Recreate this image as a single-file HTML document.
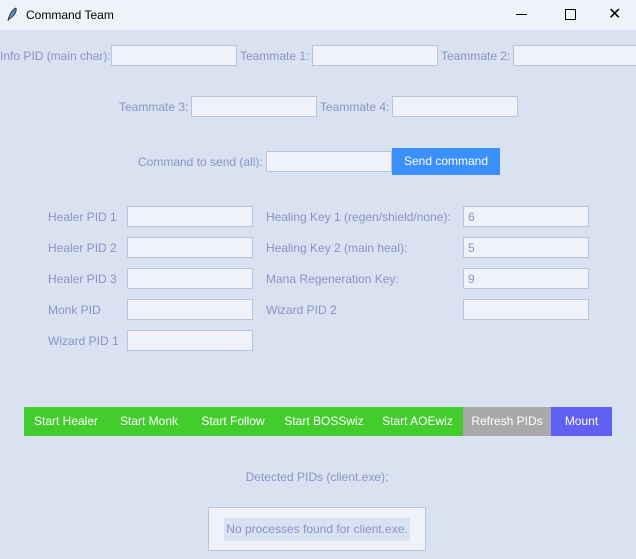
<!DOCTYPE html>
<html><head><meta charset="utf-8"><style>
body{margin:0;width:636px;height:559px;background:#d9e2f1;font-family:"Liberation Sans",sans-serif;font-size:12px;position:relative;overflow:hidden}
.a{position:absolute;white-space:nowrap}
.l{color:#8a93c6;line-height:14px}
.e{background:#eff3f9;border:1px solid #b8c6da;box-sizing:border-box;height:21px;width:126px;color:#8a93c6;padding:3px 0 0 4px}
.b{position:absolute;color:#fff;text-align:center;line-height:29px;top:407px;height:29px}
</style></head><body>
<div class="a" style="left:0;top:0;width:636px;height:30px;background:#eff3f9"></div>
<svg class="a" style="left:6px;top:7px" width="12" height="16" viewBox="0 0 12 16"><path d="M10 1C6 3 3 8 2 14M10 1C11 5 7 10 3 12" stroke="#333" fill="#4a8ee8" stroke-width="1"/></svg>
<div class="a" style="left:26px;top:8px;color:#000">Command Team</div>
<div class="a" style="left:516px;top:14px;width:11px;height:1px;background:#000"></div>
<div class="a" style="left:565px;top:9px;width:9px;height:9px;border:1px solid #000"></div>
<div class="a" style="left:608px;top:8px;font-size:16px;line-height:14px">✕</div>

<div class="a l" style="left:0;top:49px">Info PID (main char):</div>
<div class="a e" style="left:111px;top:45px"></div>
<div class="a l" style="left:240px;top:49px">Teammate 1:</div>
<div class="a e" style="left:312px;top:45px"></div>
<div class="a l" style="left:441px;top:49px">Teammate 2:</div>
<div class="a e" style="left:513px;top:45px"></div>

<div class="a l" style="left:119px;top:100px">Teammate 3:</div>
<div class="a e" style="left:191px;top:96px"></div>
<div class="a l" style="left:320px;top:100px">Teammate 4:</div>
<div class="a e" style="left:392px;top:96px"></div>

<div class="a l" style="left:138px;top:155px">Command to send (all):</div>
<div class="a e" style="left:266px;top:151px"></div>
<div class="b" style="left:392px;top:148px;width:108px;height:27px;line-height:27px;background:#3a8ff8">Send command</div>

<div class="a l" style="left:48px;top:210px">Healer PID 1</div><div class="a e" style="left:127px;top:206px"></div>
<div class="a l" style="left:48px;top:241px">Healer PID 2</div><div class="a e" style="left:127px;top:237px"></div>
<div class="a l" style="left:48px;top:272px">Healer PID 3</div><div class="a e" style="left:127px;top:268px"></div>
<div class="a l" style="left:48px;top:303px">Monk PID</div><div class="a e" style="left:127px;top:299px"></div>
<div class="a l" style="left:48px;top:334px">Wizard PID 1</div><div class="a e" style="left:127px;top:330px"></div>

<div class="a l" style="left:266px;top:210px">Healing Key 1 (regen/shield/none):</div><div class="a e" style="left:463px;top:206px">6</div>
<div class="a l" style="left:266px;top:241px">Healing Key 2 (main heal):</div><div class="a e" style="left:463px;top:237px">5</div>
<div class="a l" style="left:266px;top:272px">Mana Regeneration Key:</div><div class="a e" style="left:463px;top:268px">9</div>
<div class="a l" style="left:266px;top:303px">Wizard PID 2</div><div class="a e" style="left:463px;top:299px"></div>

<div class="b" style="left:24px;width:439px;background:#43cd2c"></div>
<div class="b" style="left:24px;width:84px">Start Healer</div>
<div class="b" style="left:108px;width:82px">Start Monk</div>
<div class="b" style="left:190px;width:86px">Start Follow</div>
<div class="b" style="left:276px;width:96px">Start BOSSwiz</div>
<div class="b" style="left:372px;width:91px">Start AOEwiz</div>
<div class="b" style="left:463px;width:88px;background:#a9a9a9">Refresh PIDs</div>
<div class="b" style="left:551px;width:61px;background:#6060f2">Mount</div>

<div class="a l" style="left:0;width:634px;text-align:center;top:470px">Detected PIDs (client.exe):</div>
<div class="a" style="left:208px;top:507px;width:218px;height:44px;box-sizing:border-box;border:1px solid #b8c6da;background:#eff3f9"></div>
<div class="a l" style="left:224px;top:518px;width:186px;height:23px;line-height:23px;text-align:center;background:#d9e2f1">No processes found for client.exe.</div>
</body></html>
